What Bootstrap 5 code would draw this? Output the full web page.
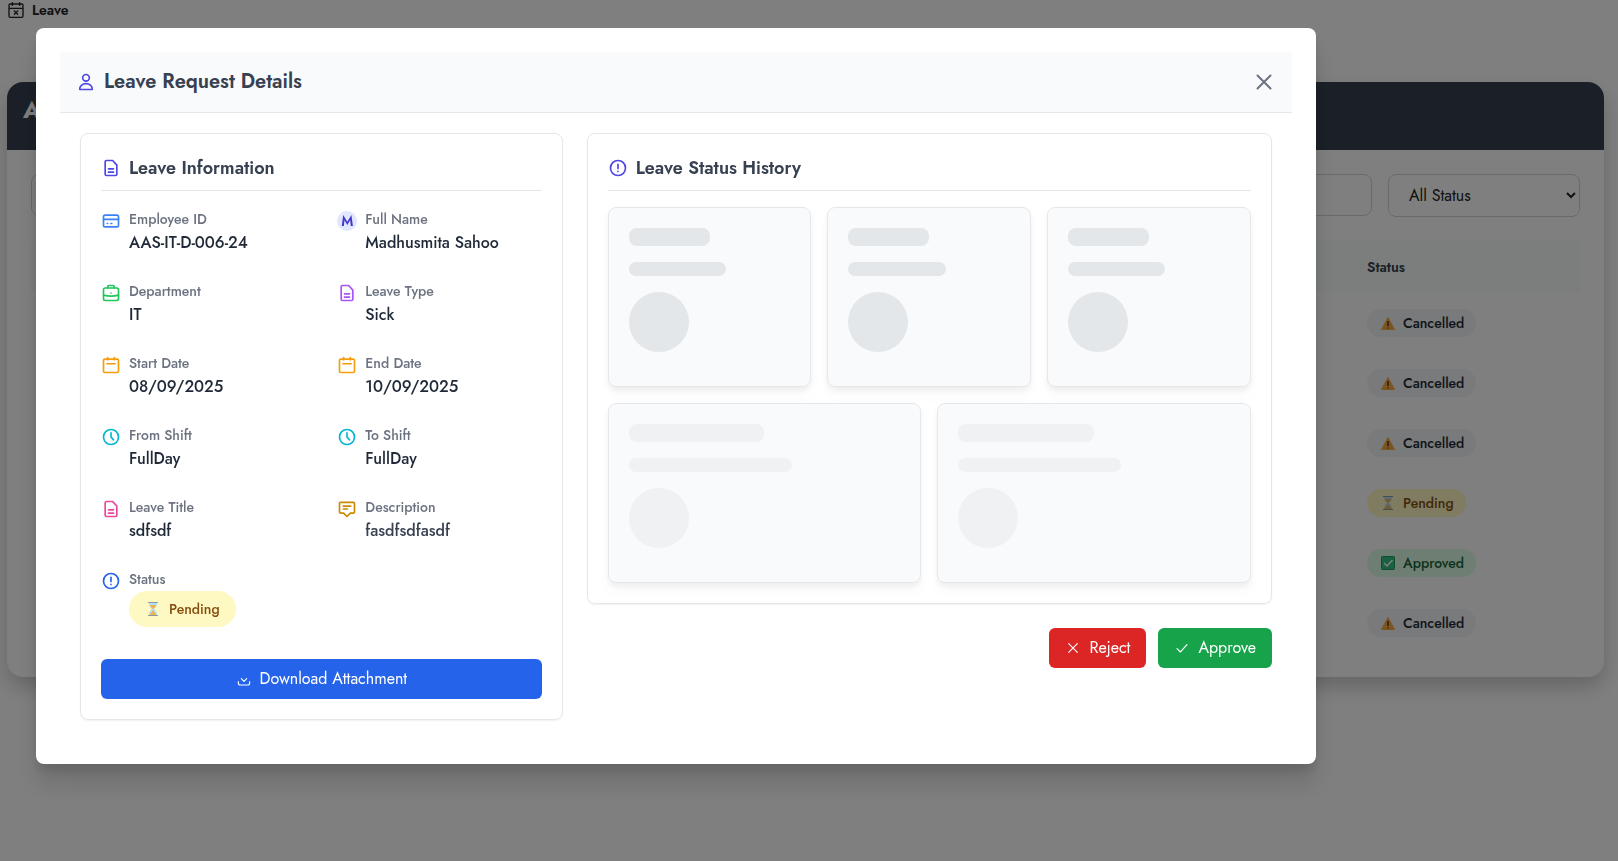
<!DOCTYPE html>
<html lang="en">
<head>
<meta charset="utf-8">
<meta name="viewport" content="width=device-width, initial-scale=1">
<title>Leave</title>
<link rel="stylesheet" href="https://cdn.jsdelivr.net/npm/bootstrap@5.3.0/dist/css/bootstrap.min.css">
<style>
body { font-family: Jost, Lato, "Noto Sans", sans-serif; color: #1f2937; background: #fff; min-height: 100vh; }
svg { flex: none; display: block; }
.ico { width: 20px; height: 20px; fill: none; stroke: currentColor; stroke-width: 2; stroke-linecap: round; stroke-linejoin: round; }
.ico-sm { width: 16px; height: 16px; }
.ico-lg { width: 24px; height: 24px; }
.crumb { padding: 0 8px; height: 20px; font-size: 14px; line-height: 20px; font-weight: 600; color: #222; }
/* page behind the dialog */
.board { margin: 62px 14px 0 7px; border-radius: 16px; box-shadow: 0 10px 20px rgba(0,0,0,.2); }
.board-head { background: #374050; color: #fff; height: 68px; padding: 12px 16px; border-radius: 16px 16px 0 0; font-size: 24px; line-height: 32px; font-weight: 700; }
.filter-box { border: 1px solid #d1d5db; border-radius: 8px; height: 42px; width: 100%; padding: 8px 16px; background: #fff; }
select.filter-box { width: 192px; height: 43px; color: #222; }
.leave-table { width: 100%; }
.leave-table th { height: 52px; padding: 0 24px; background: #f6fcfa; font-size: 14px; font-weight: 600; color: #374151; }
.leave-table td { height: 60px; padding: 0 24px; }
.status-col { width: 237px; }
.pill { border-radius: 18px; font-size: 14px; line-height: 20px; font-weight: 500; gap: 8px; padding: 4px 12px 4px 14px; }
.pill-cancelled { background: #f3f4f6; color: #1f2937; }
.pill-pending { background: #fef9c3; color: #854d0e; }
.pill-approved { background: #dcfce7; color: #166534; }
.pill-big { padding: 8px 16px; }
/* dialog */
.scrim { background: rgba(0,0,0,.5); padding: 28px 36px; }
.scrim .modal-dialog { max-width: 1280px; margin: 0; }
.scrim .modal-content { border: 0; border-radius: 8px; padding: 24px; box-shadow: 0 20px 25px rgba(0,0,0,.12), 0 8px 10px rgba(0,0,0,.1); }
.dlg-head { background: #f9fafc; border-bottom: 1px solid #e5e7eb; padding: 16px; }
.dlg-head h1 { font-size: 20px; line-height: 28px; font-weight: 600; color: #374151; }
.dlg-body { padding: 20px; }
.accent { color: #4f46e5; }
.x-btn { border: 0; background: none; color: #6b7280; padding: 0; }
.panel { border: 1px solid #e5e7eb; border-radius: 8px; padding: 20px; box-shadow: 0 1px 2px rgba(0,0,0,.06); }
.panel-title { padding-bottom: 8px; margin-bottom: 16px; border-bottom: 1px solid #e5e7eb; }
.panel-title h2 { font-size: 18px; line-height: 28px; font-weight: 600; color: #374151; }
.facts { display: grid; grid-template-columns: 1fr 1fr; column-gap: 32px; row-gap: 24px; margin-bottom: 32px; }
.facts .ico, .avatar { margin-top: 4px; }
.facts dt { font-size: 14px; line-height: 24px; font-weight: 500; color: #6b7280; }
.facts dd { font-size: 16px; line-height: 24px; font-weight: 500; color: #1f2937; margin: 0; }
.facts dd.soft { color: #374151; }
.facts dd.pill { font-size: 14px; line-height: 20px; color: #854d0e; }
.avatar { width: 20px; height: 20px; border-radius: 50%; background: #e0e7ff; color: #4338ca; font-size: 14px; line-height: 20px; font-weight: 600; text-align: center; flex: none; }
.actions { gap: 12px; }
.act { border: 0; border-radius: 6px; height: 40px; padding: 0 16px; font-size: 16px; line-height: 24px; color: #fff; gap: 8px; }
.act-blue { background: #2563eb; }
.act-red { background: #dc2626; }
.act-green { background: #16a34a; }
.act .ico { stroke-width: 1.7; }
.ghost { flex: 1; height: 180px; padding: 20px; border: 1px solid #e5e7eb; border-radius: 8px; background: #f9fafc; box-shadow: 0 4px 6px rgba(0,0,0,.06), 0 10px 15px rgba(0,0,0,.02); }
.ghost div { background: #e3e7e9; border-radius: 8px; margin-bottom: 16px; }
.ghost.faint div { background: #f0f1f3; }
.ghost .g-a { height: 18px; width: 50%; }
.ghost .g-b { height: 14px; width: 60%; }
.ghost .g-c { height: 60px; width: 60px; border-radius: 50%; }
</style>
</head>
<body>
<svg width="0" height="0" class="position-absolute" aria-hidden="true">
  <symbol id="file" viewBox="0 0 24 24"><path d="M7 3h7l5 5.500V19.500a1.500 1.500 0 0 1-1.500 1.500h-11A1.500 1.500 0 0 1 5 19.500V4.500A1.500 1.500 0 0 1 6.500 3zM9 13h6M9 17h6"/></symbol>
  <symbol id="user" viewBox="0 0 24 24"><circle cx="12" cy="7" r="4"/><path d="M4.500 21h15c.3-4-3-7-7.500-7s-7.800 3-7.500 7z"/></symbol>
  <symbol id="card-i" viewBox="0 0 24 24"><rect x="3" y="5" width="18" height="14" rx="2"/><path d="M3 10h18M7.500 15h.5M12 15h1"/></symbol>
  <symbol id="case-i" viewBox="0 0 24 24"><rect x="3" y="6" width="18" height="15" rx="2"/><path d="M8 6V4.500A1.500 1.500 0 0 1 9.500 3h5A1.500 1.500 0 0 1 16 4.500V6M3 14.500c6 1.800 12 1.800 18 0M12 12v.1"/></symbol>
  <symbol id="cal" viewBox="0 0 24 24"><rect x="3" y="5" width="18" height="16" rx="1.500"/><path d="M8 3v3M16 3v3M7 10.500h10"/></symbol>
  <symbol id="calx" viewBox="0 0 24 24"><rect x="1.500" y="3" width="21" height="20" rx="2"/><path d="M6.500 1v4M17.500 1v4M2 9.500h20M9.500 13.500l5 5M14.500 13.500l-5 5"/></symbol>
  <symbol id="clock" viewBox="0 0 24 24"><circle cx="12" cy="12" r="9"/><path d="M12 7v5l3 3.500"/></symbol>
  <symbol id="note" viewBox="0 0 24 24"><path d="M4.500 4h15A1.500 1.500 0 0 1 21 5.500v10a1.500 1.500 0 0 1-1.500 1.500H16l-4 4-4-4H4.500A1.500 1.500 0 0 1 3 15.500v-10A1.500 1.500 0 0 1 4.500 4zM7.500 8.500h9M7.500 12h5"/></symbol>
  <symbol id="info" viewBox="0 0 24 24"><circle cx="12" cy="12" r="9"/><path d="M12 7.500v5M12 16v.1"/></symbol>
  <symbol id="cross" viewBox="0 0 24 24"><path d="M5.500 5.500l13 13M18.500 5.500l-13 13"/></symbol>
  <symbol id="tick" viewBox="0 0 24 24"><path d="M4.500 13l5 5L19.500 7"/></symbol>
  <symbol id="down" viewBox="0 0 24 24"><path d="M3.500 16v2.500A2.500 2.500 0 0 0 6 21h12a2.500 2.500 0 0 0 2.500-2.500V16M8 11.500l4 4 4-4"/></symbol>
  <symbol id="warn" viewBox="1 1 14 14"><path d="M8 2.500l6.500 12h-13z" fill="#f9a83f" stroke="#f9a83f" stroke-linejoin="round"/><path d="M8 6v5M8 12.500v1" stroke="#3b3b3b" stroke-width="1.500"/></symbol>
  <symbol id="sand" viewBox="1 1 14 14"><path d="M4 2h8c0 3-1 4-3 6 2 2 3 3 3 6H4c0-3 1-4 3-6-2-2-3-3-3-6z" fill="#b9ddf3"/><path d="M5 4h6c-.5 1.500-1.500 3-3 4-1.500-1-2.500-2.500-3-4zM8 9l3.500 5h-7z" fill="#f0b252"/><path d="M3 1h10v1H3zM3 14h10v1H3z" fill="#8a9ba8"/></symbol>
  <symbol id="done" viewBox="1 1 14 14"><rect x="1.500" y="1.500" width="13" height="13" rx="1" fill="#35c47e" stroke="#1d9a5e"/><path d="M4 8l3 3 5.500-6" fill="none" stroke="#fff" stroke-width="1.500"/></symbol>
</svg>

<header class="crumb d-flex align-items-center gap-2">
  <svg class="ico ico-sm"><use href="#calx"/></svg><span>Leave</span>
</header>

<main class="board">
  <div class="board-head">A</div>
  <div class="p-4">
    <div class="d-flex gap-3 align-items-start mb-4">
      <input class="filter-box" type="text" aria-label="Search">
      <select class="filter-box flex-shrink-0" aria-label="Status filter"><option>All Status</option></select>
    </div>
    <table class="leave-table">
      <thead><tr><th></th><th class="status-col">Status</th></tr></thead>
      <tbody>
        <tr><td></td><td><span class="pill pill-cancelled d-inline-flex align-items-center"><svg width="14" height="14"><use href="#warn"/></svg>Cancelled</span></td></tr>
        <tr><td></td><td><span class="pill pill-cancelled d-inline-flex align-items-center"><svg width="14" height="14"><use href="#warn"/></svg>Cancelled</span></td></tr>
        <tr><td></td><td><span class="pill pill-cancelled d-inline-flex align-items-center"><svg width="14" height="14"><use href="#warn"/></svg>Cancelled</span></td></tr>
        <tr><td></td><td><span class="pill pill-pending d-inline-flex align-items-center"><svg width="14" height="14"><use href="#sand"/></svg>Pending</span></td></tr>
        <tr><td></td><td><span class="pill pill-approved d-inline-flex align-items-center"><svg width="14" height="14"><use href="#done"/></svg>Approved</span></td></tr>
        <tr><td></td><td><span class="pill pill-cancelled d-inline-flex align-items-center"><svg width="14" height="14"><use href="#warn"/></svg>Cancelled</span></td></tr>
      </tbody>
    </table>
  </div>
</main>

<div class="modal d-block scrim" role="dialog" aria-labelledby="dlg-title">
  <div class="modal-dialog">
    <div class="modal-content">
      <div class="dlg-head d-flex align-items-center gap-2">
        <svg class="ico accent"><use href="#user"/></svg>
        <h1 class="m-0" id="dlg-title">Leave Request Details</h1>
        <button type="button" class="x-btn ms-auto" aria-label="Close"><svg class="ico ico-lg"><use href="#cross"/></svg></button>
      </div>
      <div class="dlg-body">
        <div class="row gx-4 align-items-start">
          <div class="col-5">
            <section class="panel">
              <div class="panel-title d-flex align-items-center gap-2"><svg class="ico accent"><use href="#file"/></svg><h2 class="m-0">Leave Information</h2></div>
              <dl class="facts">
                <div class="d-flex gap-2"><svg class="ico" color="#3b82f6"><use href="#card-i"/></svg><div><dt>Employee ID</dt><dd>AAS-IT-D-006-24</dd></div></div>
                <div class="d-flex gap-2"><span class="avatar">M</span><div><dt>Full Name</dt><dd>Madhusmita Sahoo</dd></div></div>
                <div class="d-flex gap-2"><svg class="ico" color="#22c55e"><use href="#case-i"/></svg><div><dt>Department</dt><dd>IT</dd></div></div>
                <div class="d-flex gap-2"><svg class="ico" color="#a855f7"><use href="#file"/></svg><div><dt>Leave Type</dt><dd>Sick</dd></div></div>
                <div class="d-flex gap-2"><svg class="ico" color="#f59e0b"><use href="#cal"/></svg><div><dt>Start Date</dt><dd>08/09/2025</dd></div></div>
                <div class="d-flex gap-2"><svg class="ico" color="#f59e0b"><use href="#cal"/></svg><div><dt>End Date</dt><dd>10/09/2025</dd></div></div>
                <div class="d-flex gap-2"><svg class="ico" color="#06b6d4"><use href="#clock"/></svg><div><dt>From Shift</dt><dd>FullDay</dd></div></div>
                <div class="d-flex gap-2"><svg class="ico" color="#06b6d4"><use href="#clock"/></svg><div><dt>To Shift</dt><dd>FullDay</dd></div></div>
                <div class="d-flex gap-2"><svg class="ico" color="#ec4899"><use href="#file"/></svg><div><dt>Leave Title</dt><dd>sdfsdf</dd></div></div>
                <div class="d-flex gap-2"><svg class="ico" color="#ca8a04"><use href="#note"/></svg><div><dt>Description</dt><dd class="soft">fasdfsdfasdf</dd></div></div>
                <div class="d-flex gap-2"><svg class="ico" color="#2563eb"><use href="#info"/></svg><div><dt>Status</dt><dd class="pill pill-big pill-pending d-flex align-items-center"><svg width="16" height="14"><use href="#sand"/></svg>Pending</dd></div></div>
              </dl>
              <button type="button" class="act act-blue w-100 d-flex align-items-center justify-content-center"><svg class="ico ico-sm"><use href="#down"/></svg>Download Attachment</button>
            </section>
          </div>
          <div class="col-7">
            <section class="panel">
              <div class="panel-title d-flex align-items-center gap-2"><svg class="ico accent"><use href="#info"/></svg><h2 class="m-0">Leave Status History</h2></div>
              <div class="d-flex gap-3 mb-3">
                <div class="ghost"><div class="g-a"></div><div class="g-b"></div><div class="g-c"></div></div>
                <div class="ghost"><div class="g-a"></div><div class="g-b"></div><div class="g-c"></div></div>
                <div class="ghost"><div class="g-a"></div><div class="g-b"></div><div class="g-c"></div></div>
              </div>
              <div class="d-flex gap-3">
                <div class="ghost faint"><div class="g-a"></div><div class="g-b"></div><div class="g-c"></div></div>
                <div class="ghost faint"><div class="g-a"></div><div class="g-b"></div><div class="g-c"></div></div>
              </div>
            </section>
            <div class="actions d-flex justify-content-end mt-4">
              <button type="button" class="act act-red d-flex align-items-center"><svg class="ico ico-sm"><use href="#cross"/></svg>Reject</button>
              <button type="button" class="act act-green d-flex align-items-center"><svg class="ico ico-sm"><use href="#tick"/></svg>Approve</button>
            </div>
          </div>
        </div>
      </div>
    </div>
  </div>
</div>
<script src="https://cdn.jsdelivr.net/npm/bootstrap@5.3.0/dist/js/bootstrap.bundle.min.js"></script>
</body>
</html>
